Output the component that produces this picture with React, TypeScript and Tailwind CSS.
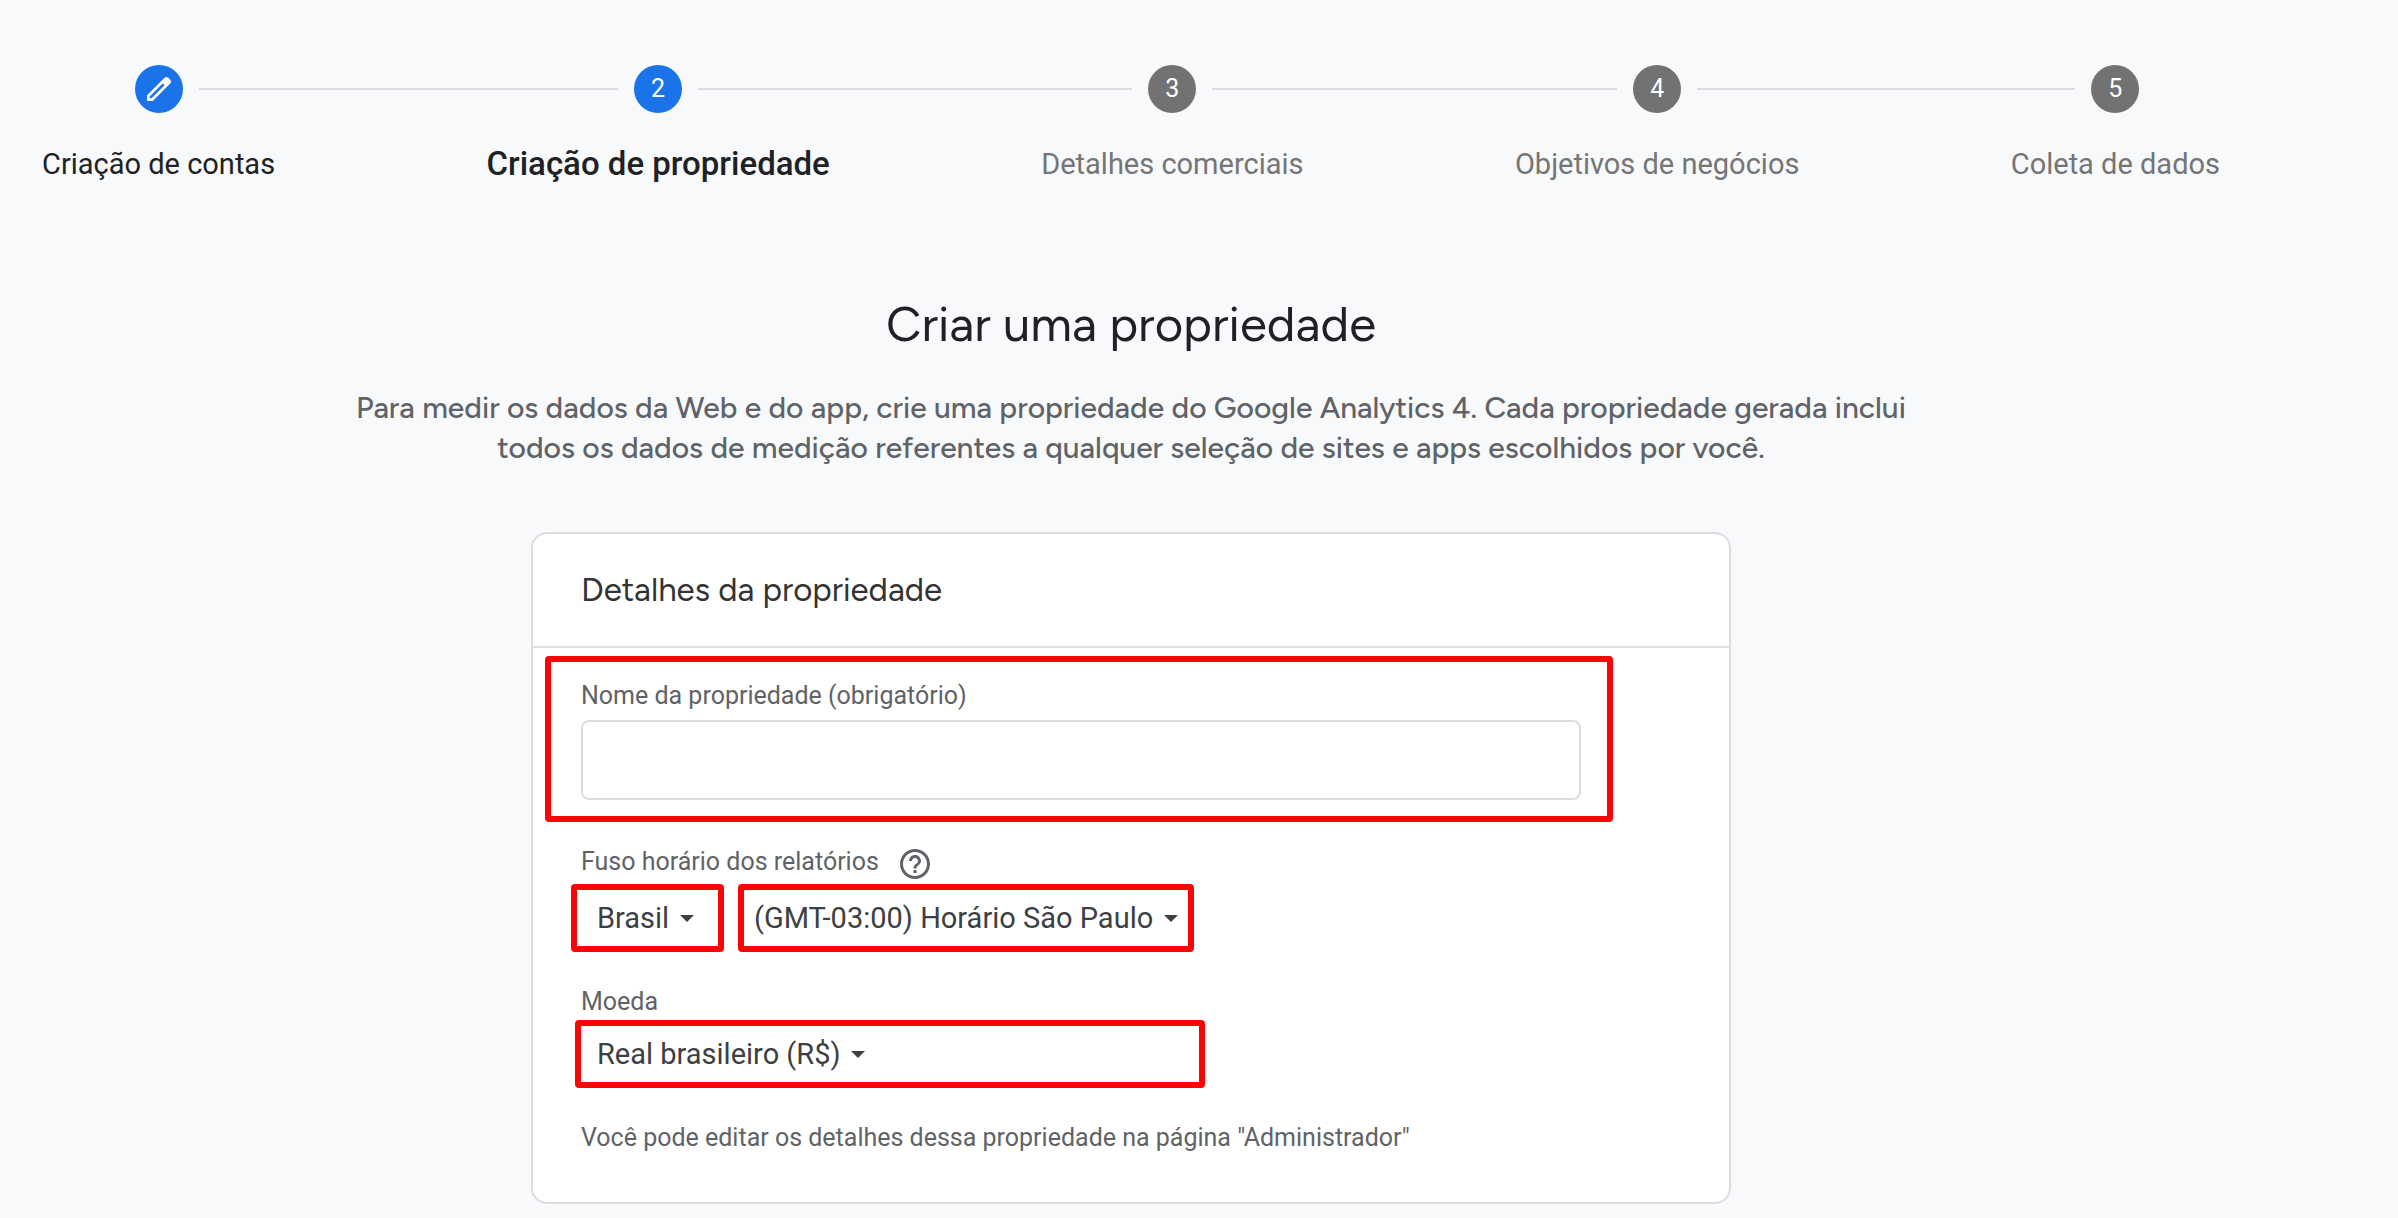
import { Fragment } from "react";
import { MdHelpOutline } from "react-icons/md";
import clsx from "clsx";

type StepState = "done" | "current" | "todo";

interface Step {
    label: string;
    state: StepState;
}

const steps: Step[] = [
    { label: "Criação de contas", state: "done" },
    { label: "Criação de propriedade", state: "current" },
    { label: "Detalhes comerciais", state: "todo" },
    { label: "Objetivos de negócios", state: "todo" },
    { label: "Coleta de dados", state: "todo" },
];

function PencilIcon() {
    return (
        <svg viewBox="0 -960 960 960" className="size-8 fill-white" aria-hidden="true">
            <path d="M200-200h57l391-391-57-57-391 391v57Zm-80 80v-170l528-527q12-11 26.5-17t30.5-6q16 0 31 6t26 18l55 56q12 11 17.5 26t5.5 30q0 16-5.5 30.5T817-647L290-120H120Z" />
        </svg>
    );
}

function Line({ hidden = false }: { hidden?: boolean }) {
    return <span className={clsx("h-[2px] flex-1", hidden ? "bg-transparent" : "bg-[#dadce0]")} />;
}

function Stepper() {
    return (
        <ol className="flex px-[42px]">
            {steps.map((step, i) => (
                <Fragment key={step.label}>
                    {i > 0 && (
                        <li role="presentation" className="flex h-12 flex-1 items-center">
                            <Line />
                        </li>
                    )}
                    <li aria-current={step.state === "current" ? "step" : undefined}>
                        <div className="flex items-center gap-4">
                            <Line hidden={i === 0} />
                            <span
                                className={clsx(
                                    "flex size-12 items-center justify-center rounded-full text-[25px] leading-8 text-white",
                                    step.state === "todo" ? "bg-[#727272]" : "bg-[#1a73e8]"
                                )}
                            >
                                {step.state === "done" ? <PencilIcon /> : i + 1}
                            </span>
                            <Line hidden={i === steps.length - 1} />
                        </div>
                        <div
                            className={clsx(
                                "mt-[31px] leading-10 whitespace-nowrap",
                                step.state === "done" && "text-[29px] text-[#202124]",
                                step.state === "current" && "text-[33px] font-medium text-[#202124]",
                                step.state === "todo" && "text-[29px] text-[#757575]"
                            )}
                        >
                            {step.label}
                        </div>
                    </li>
                </Fragment>
            ))}
        </ol>
    );
}

interface DropdownProps {
    id: string;
    label?: string;
    value: string;
    className: string;
}

function Dropdown({ id, label, value, className }: DropdownProps) {
    return (
        <div className={clsx("flex h-[68px] items-center rounded-sm border-[6px] border-[#fa0505]", className)}>
            <div className="relative flex items-center">
                <select
                    id={id}
                    aria-label={label}
                    className="h-10 appearance-none bg-transparent pr-6 text-[29px] leading-10 text-[#3c4043] outline-none"
                >
                    <option>{value}</option>
                </select>
                <svg viewBox="0 0 14 7" className="pointer-events-none absolute right-0 h-[7px] w-[14px] fill-[#3c4043]" aria-hidden="true">
                    <path d="M0 0h14L7 7z" />
                </svg>
            </div>
        </div>
    );
}

function PropertyCard() {
    return (
        <section className="mx-auto mt-16 w-full max-w-[1200px] rounded-2xl border-2 border-[#dadce0] bg-white">
            <header className="border-b-2 border-[#e0e0e0] px-12 py-9">
                <h2 className="font-['Figtree','Open_Sans',sans-serif] text-[33px] leading-10 text-[#333333]">Detalhes da propriedade</h2>
            </header>

            <form className="px-3 pt-2 pb-12 text-[25px] leading-8 text-[#5f6368]">
                {/* Name */}
                <div className="max-w-[1068px] rounded-sm border-[6px] border-[#fa0505] pt-[18px] pr-[26px] pb-4 pl-[30px]">
                    <label htmlFor="name" className="block">Nome da propriedade (obrigatório)</label>
                    <input
                        id="name"
                        type="text"
                        className="mt-2 block h-20 w-full rounded-lg border-2 border-[#dadce0] bg-white px-4 outline-none"
                    />
                </div>

                {/* Time zone */}
                <div className="mt-6 flex h-9 items-start gap-[18px] pl-9">
                    <label htmlFor="country">Fuso horário dos relatórios</label>
                    <button type="button" aria-label="Ajuda">
                        <MdHelpOutline className="size-9" />
                    </button>
                </div>
                <div className="mt-[2px] flex items-center gap-[14px] pl-[26px]">
                    <Dropdown id="country" value="Brasil" className="pr-6 pl-5" />
                    <Dropdown id="timezone" label="Fuso horário" value="(GMT-03:00) Horário São Paulo" className="px-[10px]" />
                </div>

                {/* Currency */}
                <label htmlFor="currency" className="mt-[34px] block pl-9">Moeda</label>
                <div className="mt-[2px] pl-[30px]">
                    <Dropdown id="currency" value="Real brasileiro (R$)" className="max-w-[630px] px-4" />
                </div>

                <p className="mt-[34px] pl-9">Você pode editar os detalhes dessa propriedade na página "Administrador"</p>
            </form>
        </section>
    );
}

export default function App() {
    return (
        <div className="min-h-screen bg-[#f8f9fb] pr-34 font-['Roboto',sans-serif]">
            <main className="pt-[65px]">
                <Stepper />
                <h1 className="mt-28 text-center font-['Figtree','Open_Sans',sans-serif] text-[49px] leading-14 text-[#202124]">
                    Criar uma propriedade
                </h1>
                <p className="mx-auto mt-9 max-w-[1600px] text-center font-['Figtree','Open_Sans',sans-serif] text-[30px] leading-10 font-medium text-[#5f6368]">
                    Para medir os dados da Web e do app, crie uma propriedade do Google Analytics 4. Cada propriedade gerada inclui
                    todos os dados de medição referentes a qualquer seleção de sites e apps escolhidos por você.
                </p>
                <PropertyCard />
            </main>
        </div>
    );
}
